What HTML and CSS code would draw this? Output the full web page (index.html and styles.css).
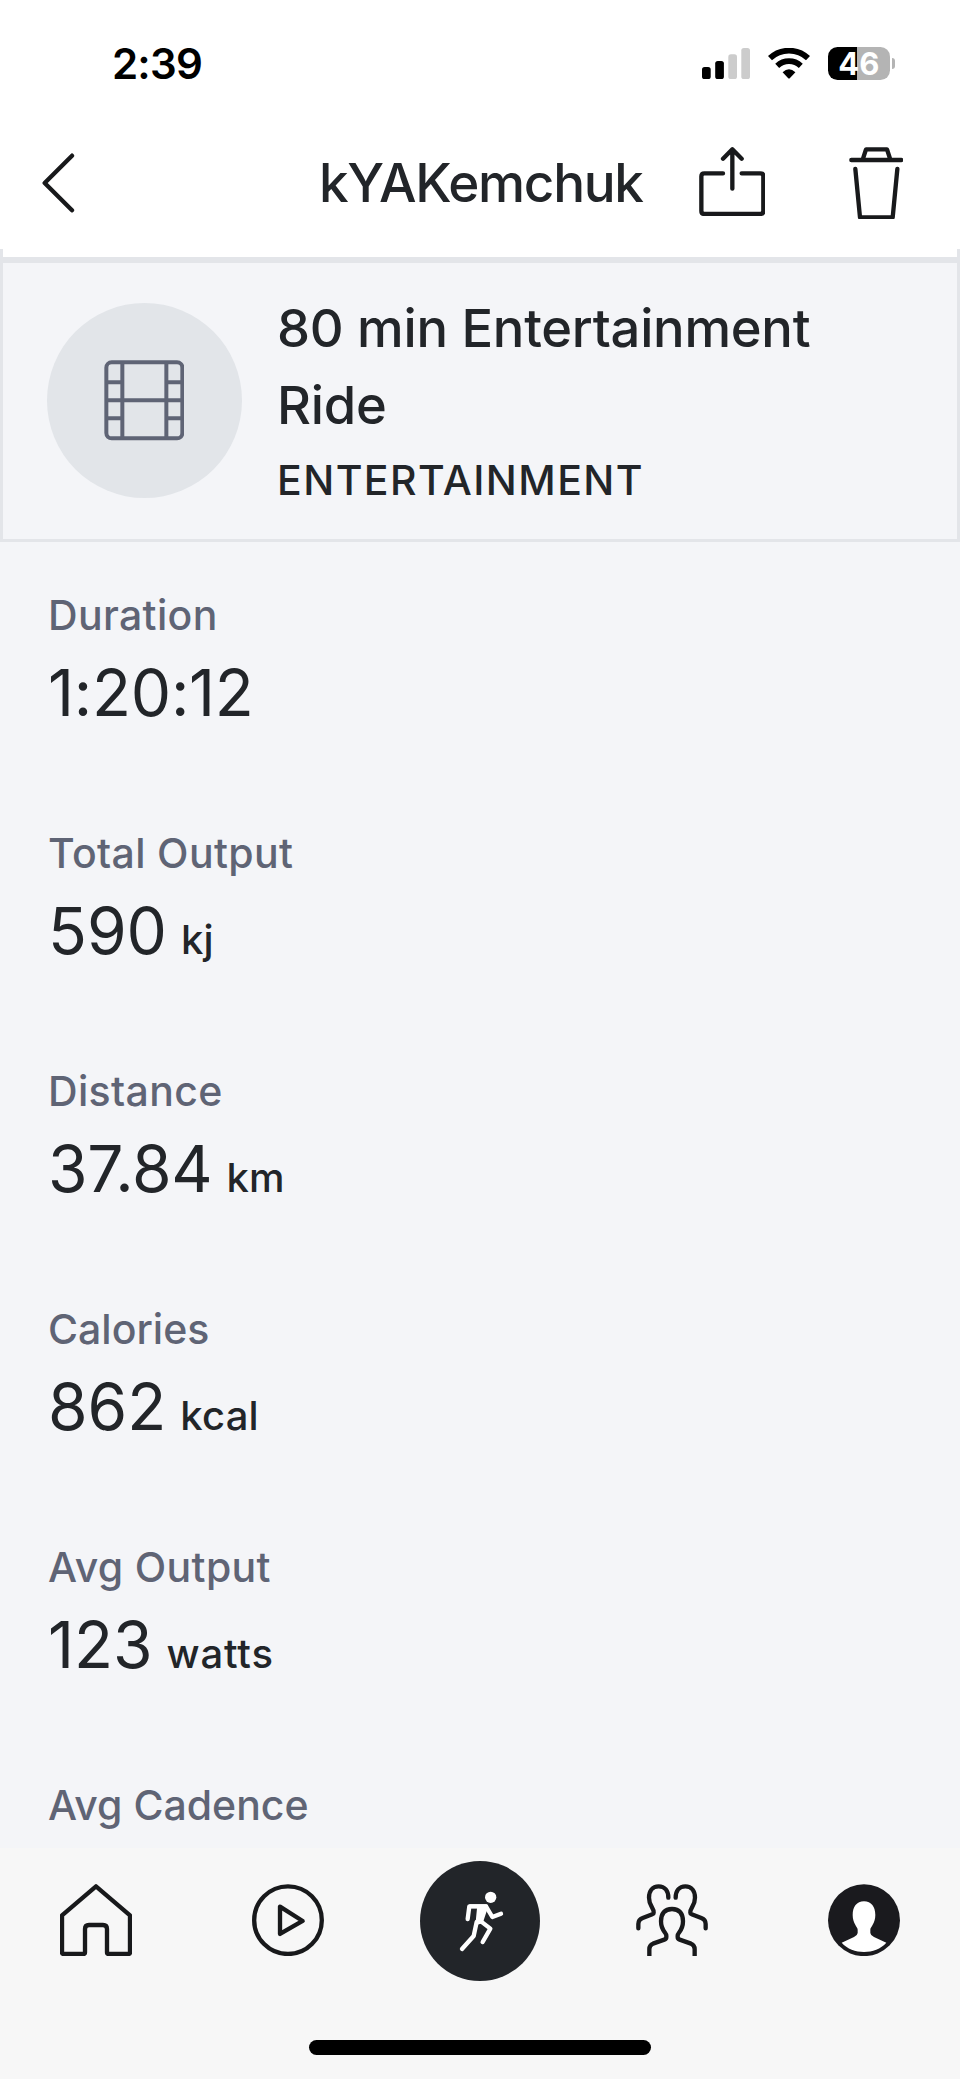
FILE: index.html
```html
<!DOCTYPE html>
<html lang="en">
<head>
<meta charset="utf-8">
<title>Workout details</title>
<link rel="stylesheet" href="styles.css">
</head>
<body>
<div class="screen">
  <div class="status">
    <span class="time">2:39</span>
    <div class="status-icons">
      <svg class="signal" viewBox="0 0 48 31">
        <rect x="0" y="19" width="8.7" height="12" rx="2.6"/>
        <rect x="13.2" y="13" width="8.7" height="18" rx="2.6"/>
        <rect class="dim" x="26.3" y="6.3" width="8.7" height="24.7" rx="2.6"/>
        <rect class="dim" x="39.3" y="0" width="8.7" height="31" rx="2.6"/>
      </svg>
      <svg class="wifi" viewBox="0 0 42 31">
        <path class="arc" d="M2 10.2A27.7 27.7 0 0 1 40 10.2M9.2 17.8A17.4 17.4 0 0 1 32.8 17.8"/>
        <path d="M14.6 24.2Q21 18.2 27.4 24.2L22 30Q21 31.200 20 30Z"/>
      </svg>
      <div class="battery-wrap">
        <div class="battery">46</div>
        <div class="nub"></div>
      </div>
    </div>
  </div>
  <header class="bar">
    <svg class="back" viewBox="127 459 98 180"><path d="M217 467L135 549L217 631"/></svg>
    <h1 class="title">kYAKemchuk</h1>
    <svg class="share" viewBox="656 440 200 208"><path d="M728 519H672Q663 519 663 528V632Q663 641 672 641H840Q849 641 849 632V528Q849 519 840 519H784M756 565V447M728 475L756 447L784 475"/></svg>
    <svg class="trash" viewBox="1106 440 164 218"><path d="M1113 479H1263M1148 475L1157 447H1220L1229 475M1125 506L1139 651H1237L1251 506"/></svg>
  </header>
  <div class="stub"></div>
  <section class="card">
    <div class="disc">
      <svg class="film" viewBox="311 362 242 242"><rect x="318" y="369" width="228" height="228" rx="16"/><path d="M366 369V597M498 369V597M318 429H366M318 483H546M318 537H366M498 429H546M498 537H546"/></svg>
    </div>
    <div class="card-text">
      <h2 class="class-name">80 min Entertainment<br>Ride</h2>
      <div class="kind">ENTERTAINMENT</div>
    </div>
  </section>
  <main class="stats">
    <div class="stat"><div class="label loose">Duration</div><div class="value"><span class="num">1:20:12</span></div></div>
    <div class="stat"><div class="label loose">Total Output</div><div class="value"><span class="num whole">590</span><span class="unit">kj</span></div></div>
    <div class="stat"><div class="label loose">Distance</div><div class="value"><span class="num">37.84</span><span class="unit">km</span></div></div>
    <div class="stat"><div class="label">Calories</div><div class="value"><span class="num whole">862</span><span class="unit">kcal</span></div></div>
    <div class="stat"><div class="label loose">Avg Output</div><div class="value"><span class="num whole">123</span><span class="unit wide">watts</span></div></div>
    <div class="stat"><div class="label">Avg Cadence</div></div>
  </main>
  <footer class="footer">
    <nav class="tabs">
      <a class="tab"><svg class="icon" viewBox="180 311 216 217"><path d="M288 318L390 405V516Q390 521 385 521H326Q321 521 321 516V446Q321 434 309 434H267Q255 434 255 446V516Q255 521 250 521H191Q186 521 186 516V405Z"/></svg></a>
      <a class="tab"><svg class="icon" viewBox="756 311 216 217"><circle cx="864" cy="419.500" r="101.500"/><path d="M840 379V461L908 422Z"/></svg></a>
      <a class="tab"><span class="active"><svg class="runner" viewBox="120 63 360 360"><circle cx="332" cy="172" r="17"/><path class="torso" d="M268 193H318Q326 193 324 202L308 250L286 256L291 205H268Z"/><path class="limb" d="M263 237L268 199H318L337 231L363 221M290 246L281 288L246 327M299 241L331 266L308 306"/></svg></span></a>
      <a class="tab"><svg class="icon" viewBox="168 131 216 217"><path d="M265 172C265 152 254 138 236 138C217 138 207 153 207 172C207 198 222 202 221 217C221 219 220 221 217 222L188 233Q175 238 175 251V264M287 172C287 152 298 138 316 138C335 138 345 153 345 172C345 198 330 202 331 217C331 219 332 221 335 222L364 233Q377 238 377 251V264"/><path class="butt" d="M208 348V326Q208 315 219 310L253 298Q259 296 259 290V286C259 276 243 272 243 243C243 220 254 206 276 206C298 206 309 220 309 243C309 272 293 276 293 286V290Q293 296 299 298L333 310Q344 315 344 326V348"/></svg></a>
      <a class="tab"><svg class="icon" viewBox="744 131 216 217"><circle class="solid" cx="852" cy="239.500" r="108"/><path class="bust" d="M785 307L822 290Q833 284 833 278V268C833 260 818 250 818 224C818 199 830 183 852 183C874 183 886 199 886 224C886 250 871 260 871 268V278Q871 284 882 290L919 307C886 344 818 344 785 307Z"/></svg></a>
    </nav>
    <div class="indicator"></div>
  </footer>
</div>
</body>
</html>
```
FILE: styles.css
```css
* { box-sizing: border-box; }
body { margin: 0; font-family: Inter, "Liberation Sans", sans-serif; color: #222529; }
h1, h2 { margin: 0; font-weight: 500; }
svg { display: block; flex: none; }
.screen { width: 960px; height: 2079px; display: flex; flex-direction: column; overflow: hidden; background: #f4f5f8; }

.status { height: 126px; flex: none; display: flex; justify-content: space-between; align-items: flex-start; padding: 38px 65px 0 112px; background: #fff; color: #000; }
.time { font-size: 42px; line-height: 52px; font-weight: 600; letter-spacing: -0.8px; }
.status-icons { display: flex; padding-top: 8.700px; }
.signal { width: 48px; height: 31px; margin: 1.300px 18px 0 0; }
.dim { fill: #ccc; }
.wifi { width: 42px; height: 31px; margin: 1.300px 18px 0 0; }
.arc { fill: none; stroke: #000; stroke-width: 5.800; }
.battery-wrap { display: flex; align-items: center; gap: 2px; }
.battery { width: 61.500px; height: 33.600px; border-radius: 9.500px; background: linear-gradient(90deg, #000 29px, #b4b4b4 29px); color: #fff; font-size: 31px; font-weight: 700; line-height: 34px; text-align: center; }
.nub { width: 3.500px; height: 11px; border-radius: 0 5px 5px 0; background: #b4b4b4; }

.bar { height: 123px; flex: none; display: flex; align-items: flex-start; padding: 20px 0 0 42px; background: #fff; }
.back, .share, .trash { fill: none; stroke: #18191b; stroke-width: 13; stroke-linecap: round; stroke-linejoin: round; }
.back { width: 32.700px; height: 60px; margin-top: 7px; }
.title { width: 324px; margin: 1px 0 0 244.300px; font-size: 53px; line-height: 72px; letter-spacing: -1.300px; white-space: nowrap; }
.share { width: 66.700px; height: 69.300px; margin: 0.700px 0 0 55.700px; }
.trash { width: 54.700px; height: 72.700px; margin: 0.700px 0 0 83.300px; }
.stub { height: 8px; flex: none; background: #fff; border: solid #e3e5e9; border-width: 0 3px; }

.card { height: 285px; flex: none; display: flex; padding: 27px 43.500px 0; border: 3px solid #e3e5e9; border-top-width: 6px; }
.disc { width: 195px; height: 195px; flex: none; margin-top: 13.300px; border-radius: 50%; background: #e2e5e9; display: grid; place-items: center; }
.film { width: 80.700px; height: 80.700px; fill: none; stroke: #5f6475; stroke-width: 12; }
.card-text { margin-left: 35.500px; }
.class-name { font-size: 52.500px; line-height: 77px; letter-spacing: -0.270px; white-space: nowrap; }
.kind { margin-top: 6px; font-size: 41px; line-height: 60px; font-weight: 500; letter-spacing: 1.450px; }

.stats { height: 1306px; flex: none; display: flex; flex-direction: column; gap: 92px; padding: 43px 48px 0; overflow: hidden; }
.stat { display: flex; flex-direction: column; gap: 10px; }
.label { font-size: 41px; line-height: 60px; font-weight: 500; color: #5f6475; }
.loose { letter-spacing: 0.350px; }
.value { display: flex; align-items: baseline; gap: 14px; height: 76px; }
.num { font-size: 64px; line-height: 76px; letter-spacing: -0.250px; }
.whole { letter-spacing: 0; }
.unit { font-size: 40px; font-weight: 500; letter-spacing: 0.200px; }
.wide { letter-spacing: 0.800px; }

.footer { flex: 1; display: flex; flex-direction: column; align-items: center; padding-top: 13px; background: #f7f7f7; }
.tabs { width: 960px; height: 120px; display: grid; grid-template-columns: repeat(5, 192px); align-items: center; justify-items: center; }
.icon { width: 72px; height: 72.300px; margin-top: -2px; fill: none; stroke: #18191b; stroke-width: 13; stroke-linecap: round; stroke-linejoin: round; }
.butt { stroke-linecap: butt; }
.solid { fill: #1a1a1e; stroke: none; }
.bust { fill: #fff; stroke: none; }
.active { display: block; border-radius: 50%; background: #222529; }
.runner { width: 120px; height: 120px; fill: #fff; }
.limb { fill: none; stroke: #fff; stroke-width: 13; stroke-linecap: round; stroke-linejoin: round; }
.indicator { width: 342px; height: 15px; margin-top: 59px; border-radius: 8px; background: #000; }
```
